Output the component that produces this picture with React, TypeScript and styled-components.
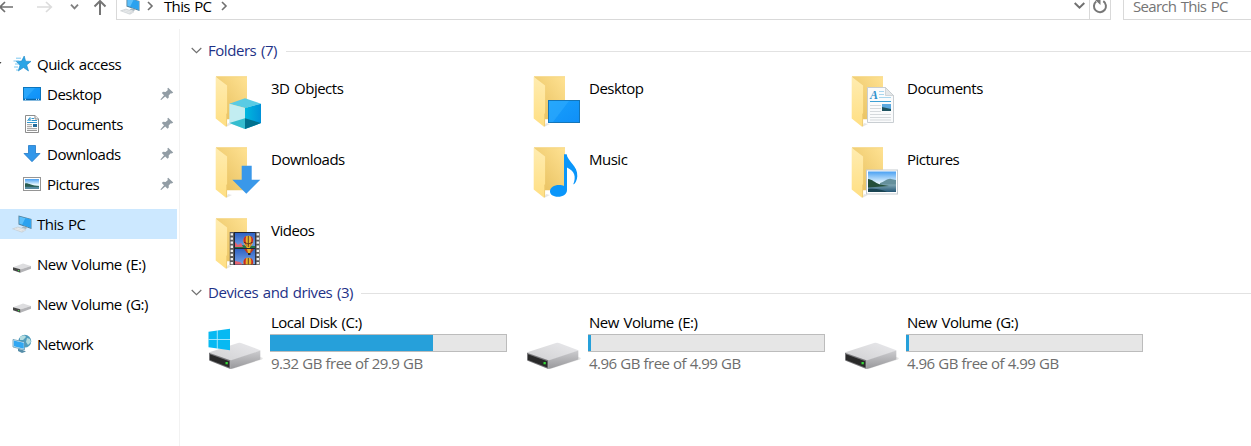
import React from "react";
import styled, { createGlobalStyle } from "styled-components";

const GlobalStyle = createGlobalStyle`
  * { box-sizing: border-box; }
  body {
    margin: 0;
    background: #fff;
    color: #000;
    font: 15px/20px "Open Sans", "Noto Sans", sans-serif;
    letter-spacing: -0.5px;
    word-spacing: 1.2px;
    overflow: hidden;
  }
  svg { display: block; flex: none; }
`;

const Window = styled.div`
  display: flex;
  flex-direction: column;
  height: 446px;
  overflow: hidden;
`;

const Toolbar = styled.header`
  display: flex;
  flex: none;
  height: 29px;
  margin-top: -9px;
`;

const NavButtons = styled.div`
  width: 116px;
  flex: none;
`;

const AddressBar = styled.div`
  display: flex;
  align-items: center;
  width: 995px;
  border: 1px solid #d9d9d9;
  padding-left: 3px;
`;

const Crumb = styled.span`
  width: 48px;
  margin: 0 9px 0 10px;
  letter-spacing: -0.65px;
  white-space: nowrap;
`;

const CrumbGap = styled.span`
  width: 7px;
`;

const AddressActions = styled.div`
  display: flex;
  align-items: center;
  align-self: stretch;
  margin-left: auto;
`;

const Refresh = styled.div`
  display: flex;
  align-items: center;
  justify-content: center;
  align-self: stretch;
  width: 21px;
  margin-left: 4px;
  border-left: 1px solid #d9d9d9;
`;

const SearchBox = styled.div`
  display: flex;
  align-items: center;
  flex: 1;
  margin-left: 12px;
  padding-left: 9px;
  border: 1px solid #d9d9d9;
  border-right: 0;
  color: #757575;
  letter-spacing: -0.7px;
`;

const Body = styled.div`
  display: flex;
  flex: 1;
  margin-top: 9px;
`;

const Sidebar = styled.nav`
  width: 180px;
  flex: none;
  padding-top: 20px;
  border-right: 1px solid #f2f2f2;
`;

const NavRow = styled.div<{ $nested?: boolean; $selected?: boolean; $spaced?: boolean; $flush?: boolean }>`
  display: flex;
  align-items: center;
  width: 177px;
  height: 30px;
  margin-top: ${(p) => (p.$spaced ? 10 : 0)}px;
  padding: 0 3px 0 ${(p) => (p.$flush ? 0 : p.$nested ? 22 : 12)}px;
  background: ${(p) => (p.$selected ? "#cce8ff" : "transparent")};
`;

const NavLabel = styled.span`
  flex: 1;
  margin-left: 5px;
  white-space: nowrap;
`;

const Content = styled.main`
  flex: 1;
  padding: 11px 0 0 11px;
`;

const GroupHeader = styled.h2`
  display: flex;
  align-items: center;
  height: 20px;
  margin: 0;
  color: #1e3287;
  font-size: 15px;
  font-weight: 400;
  letter-spacing: -0.45px;
  white-space: nowrap;
  &::after {
    content: "";
    flex: 1;
    height: 1px;
    margin: 2px 0 0 9px;
    background: #e2e2e2;
  }
`;

const GroupTitle = styled.span<{ $width: number }>`
  width: ${(p) => p.$width}px;
  margin-left: 6px;
`;

const FolderGrid = styled.div`
  display: grid;
  grid-template-columns: repeat(3, 318px);
  grid-template-rows: 71px 71px 64px;
  padding: 16px 0 0 24px;
`;

const FolderTile = styled.div`
  display: flex;
`;

const FolderLabel = styled.span`
  margin: 2px 0 0 8px;
`;

const DriveGrid = styled.div`
  display: grid;
  grid-template-columns: repeat(3, 318px);
  padding: 10px 0 0 17px;
`;

const DriveTile = styled.div`
  display: flex;
`;

const DriveInfo = styled.div`
  width: 237px;
  margin-left: 6px;
`;

const DriveText = styled.div<{ $muted?: boolean }>`
  height: 20px;
  padding-left: 1px;
  margin-top: ${(p) => (p.$muted ? 1 : 0)}px;
  color: ${(p) => (p.$muted ? "#6d6d6d" : "#000")};
  word-spacing: ${(p) => (p.$muted ? 0.2 : 1.2)}px;
`;

const Meter = styled.div`
  height: 18px;
  margin-top: 2px;
  border: 1px solid #bcbcbc;
  background: #e6e6e6;
`;

const MeterFill = styled.div<{ $px: number }>`
  width: ${(p) => p.$px}px;
  height: 16px;
  margin-left: -1px;
  background: #26a0da;
`;

const DriveIconSlot = styled.div`
  padding-top: 16px;
`;

const DefsHolder = styled.div`
  height: 0;
  flex: none;
`;

const Gradients = () => (
  <svg width="0" height="0">
    <defs>
      <linearGradient id="back" x1="0" y1="1" x2="1" y2="0">
        <stop offset="0" stopColor="#e5bd5a" />
        <stop offset="1" stopColor="#ffe293" />
      </linearGradient>
      <linearGradient id="flap" x1="0" y1="0" x2="0" y2="1">
        <stop offset="0" stopColor="#ffecb0" />
        <stop offset="1" stopColor="#ffdf83" />
      </linearGradient>
      <linearGradient id="sky" x1="0" y1="0" x2="0" y2="1">
        <stop offset="0" stopColor="#4aa0f2" />
        <stop offset=".55" stopColor="#e3f4fd" />
        <stop offset="1" stopColor="#a9d2e4" />
      </linearGradient>
      <linearGradient id="lake" x1="0" y1="0" x2="0" y2="1">
        <stop offset="0" stopColor="#82a9b6" />
        <stop offset="1" stopColor="#245675" />
      </linearGradient>
      <linearGradient id="blue" x1="0" y1="0" x2="1" y2="1">
        <stop offset="0" stopColor="#18a0fb" />
        <stop offset="1" stopColor="#0f8ff8" />
      </linearGradient>
      <linearGradient id="cubeRight" x1="0" y1="0" x2="1" y2="0">
        <stop offset="0" stopColor="#00b8de" />
        <stop offset="1" stopColor="#0091d8" />
      </linearGradient>
      <linearGradient id="driveTop" x1="0" y1="1" x2="1" y2="0">
        <stop offset="0" stopColor="#d0d0d2" />
        <stop offset="1" stopColor="#e9e9ec" />
      </linearGradient>
      <linearGradient id="driveSide" x1="0" y1="0" x2="0" y2="1">
        <stop offset="0" stopColor="#cccccf" />
        <stop offset="1" stopColor="#98989b" />
      </linearGradient>
      <linearGradient id="film" x1="0" y1="0" x2="0" y2="1">
        <stop offset="0" stopColor="#2e62c4" />
        <stop offset="1" stopColor="#77a4e8" />
      </linearGradient>
    </defs>
  </svg>
);

const Chevron = ({ dir = "down", size = 10, color = "#707070", stroke = 1.6 }: { dir?: "down" | "right"; size?: number; color?: string; stroke?: number }) =>
  dir === "down" ? (
    <svg width={size} height="7" viewBox={`0 0 ${size} 7`}>
      <path d={`M.7 1 L${size / 2} 5.6 L${size - 0.7} 1`} fill="none" stroke={color} strokeWidth={stroke} />
    </svg>
  ) : (
    <svg width="7" height="10" viewBox="0 0 7 10">
      <path d="M1 1 L5 5 L1 9" fill="none" stroke={color} strokeWidth={stroke} />
    </svg>
  );

const Expander = () => (
  <svg width="12" height="8" viewBox="0 0 12 8">
    <path d="M0 2H1.5L0 4Z" fill="#404040" />
  </svg>
);

const NavArrows = () => (
  <svg width="116" height="29" viewBox="0 -9 116 29" fill="none" strokeWidth="1.7">
    <path d="M0 7H13M5 2L0 7L5 12" stroke="#707070" />
    <path d="M37 7H51M46 2L51.3 7L46 12" stroke="#dcdcdc" />
    <path d="M71 4.7L74.5 8.3L78 4.7" stroke="#808080" strokeWidth="1.9" />
    <path d="M100 15V1M94.5 6.5L100 1L105.5 6.5" stroke="#757575" strokeWidth="2" />
  </svg>
);

const PcIcon = () => (
  <svg width="20" height="20" viewBox="0 0 20 20">
    <path d="M6.5 1.5L19.5 5V15L6.5 10.5Z" fill="#4d7e9b" />
    <path d="M7.3 2.4L18.8 5.5V13.8L7.3 9.8Z" fill="#5bbffb" />
    <path d="M13.5 4L18.8 5.5V13.8L10 10.8Z" fill="#2ba2ef" />
    <path d="M12 12.2L16 13.6L13.5 15L9.5 13.5Z" fill="#a7b6be" />
    <path d="M.5 14.8L6 13L14 15.8L10 18.3Z" fill="#d6dadd" stroke="#c3c9cd" strokeWidth=".5" />
    <path d="M3 14.8L10 17M5 14L12.5 16.3" stroke="#f1f3f4" strokeWidth=".6" />
  </svg>
);

const StarIcon = () => (
  <svg width="20" height="20" viewBox="0 0 20 20">
    <path d="M12.2 2L13.6 7.2L19 7.4L14.7 10.9L16.5 17L11.5 13.5L6.2 17L8 11.2L4.2 7.4L9.6 7.1Z" fill="#2ba5e6" stroke="#1784c5" strokeWidth=".6" />
    <path d="M4 4.2H9M1.5 7H7M3 10H7M2 13H6M4 16H7" stroke="#5bb9eb" strokeWidth=".8" />
  </svg>
);

const DesktopIcon = () => (
  <svg width="20" height="20" viewBox="0 0 20 20">
    <rect x="1.5" y="3.5" width="17" height="12.5" fill="url(#blue)" stroke="#0c75bd" />
    <path d="M2 4H13L4 14H2Z" fill="#48b8ff" opacity=".4" />
    <path d="M2 15.3H18" stroke="#075e9d" />
    <path d="M3 15.3H5M14 15.3H17" stroke="#dff3ff" strokeDasharray="1 1" />
  </svg>
);

const DocumentIcon = () => (
  <svg width="20" height="20" viewBox="0 0 20 20">
    <path d="M3.5 1.5H13L16.5 5V18.5H3.5Z" fill="#fff" stroke="#8d8d8d" />
    <path d="M13 1.5V5H16.5" fill="#eee" stroke="#8d8d8d" />
    <path d="M5.5 6.8L8 3.5V7M6 6H8.5M9.5 4.5H12M9.5 6.5H15M5 8.5H15" fill="none" stroke="#2f96ce" />
    <path d="M5 10.7H10M5 12.7H10M5 14.7H15M5 16.5H15" stroke="#8f8f8f" strokeWidth=".9" />
    <rect x="11" y="10" width="4" height="3" fill="#246c9b" />
  </svg>
);

const DownloadIcon = () => (
  <svg width="20" height="20" viewBox="0 0 20 20">
    <path d="M6.5 1.5H13.5V9.5H18L10 17.7L2 9.5H6.5Z" fill="#3297ea" stroke="#2179c7" strokeWidth=".8" />
  </svg>
);

const PictureIcon = () => (
  <svg width="20" height="20" viewBox="0 0 20 20">
    <rect x="1.5" y="3.5" width="17" height="13" fill="#fff" stroke="#959595" />
    <rect x="3" y="5" width="14" height="10" fill="url(#sky)" />
    <path d="M3 9.5C6 8.5 9 12 17 12V13H3Z" fill="#285c50" />
    <path d="M3 12.8H17V15H3Z" fill="#568aa0" />
  </svg>
);

const SmallDrive = () => (
  <svg width="20" height="20" viewBox="0 0 20 20">
    <path d="M1 13.2L11 9.5L19 12L8.3 15.5Z" fill="#dddddf" />
    <path d="M8.3 15.5L19 12V14.7L8.3 18.7Z" fill="#b4b4b7" />
    <path d="M1 13.2L8.3 15.3V18.7L1 16.3Z" fill="#474747" />
    <rect x="6" y="16" width="1.2" height="1.2" fill="#3ed34d" />
  </svg>
);

const NetworkIcon = () => (
  <svg width="20" height="20" viewBox="0 0 20 20">
    <circle cx="12.8" cy="7.2" r="6.4" fill="#4f9cbd" />
    <path d="M8 3C10 .8 14 1 14 3L11 6L8 6ZM15 4L18 5L19 8L16 11L14 8Z" fill="#b4dcdf" />
    <path d="M1 5.5L12.5 8V15.8L1 13Z" fill="#e7f5fb" stroke="#4788a8" strokeWidth=".7" />
    <path d="M1.8 6.5L11.8 8.8V14.8L1.8 12.2Z" fill="#31a7f2" />
    <path d="M6 14.7V17L10 19L14 17.4L10 15.8" fill="#558da8" />
  </svg>
);

const PinIcon = () => (
  <svg width="14" height="14" viewBox="0 0 14 14">
    <path d="M8.2.8L13.2 5.4L11.8 6.5L10.8 6.2L8.7 8.5L8.8 10.6L7.5 11.8L5.2 9.4L1.2 13L.4 12.6L4 8.2L1.8 6L3.1 4.8L5.6 5L7.9 2.9L7.3 1.8Z" fill="#929da5" />
  </svg>
);

const CubeArt = () => (
  <>
    <path d="M14.3 27.7L30 22.3L46 27.7L30 32Z" fill="#59cbe4" />
    <path d="M14.3 27.7L30 32V53L14.3 47Z" fill="#c2edf1" />
    <path d="M30 32L46 27.7V47L30 53Z" fill="url(#cubeRight)" />
    <path d="M14.3 47L30 42.3V53Z" fill="#35bdcf" />
    <path d="M30 42.3L46 47L30 53Z" fill="#00718f" />
  </>
);

const DesktopArt = () => (
  <>
    <rect x="15.5" y="24.5" width="31" height="22" fill="url(#blue)" stroke="#1475b8" />
    <path d="M16 25H36L20 46H16Z" fill="#3cb3ff" opacity=".4" />
  </>
);

const DocumentArt = () => (
  <>
    <path d="M16.5 11.5H34.5L42.5 19.5V46.5H16.5Z" fill="#fafbfc" stroke="#c9ced2" />
    <path d="M34.5 11.5V19.5H42.5Z" fill="#e4e7e9" stroke="#c3c8cb" strokeWidth=".7" />
    <text x="19" y="23" fontFamily="Liberation Serif, serif" fontSize="12" fontWeight="700" fontStyle="italic" fill="#2d90cb">A</text>
    <path d="M28 15.5H33M28 18.5H33M28 21.5H40" stroke="#a8d6ee" />
    <path d="M19 25.5H40" stroke="#3c9fd4" />
    <path d="M19 29.5H30M19 32.5H30M19 35.5H30M19 38.5H40M19 41.5H40M19 44H40" stroke="#d5d9dc" />
    <rect x="31" y="28" width="9" height="7" fill="#5ca9df" />
    <path d="M31 31L40 33V35H31Z" fill="#1e5360" />
  </>
);

const DownloadArt = () => (
  <path d="M26.7 18.7H36.7V32.7H45.3L31.3 46.7L17.3 32.7H26.7Z" fill="#3a98e9" />
);

const MusicArt = () => (
  <path d="M31 7.3H33.7C34.2 14 45 19 44.3 29.2C44 33 42.5 36.5 40.2 37.6C43.5 29.5 41.5 24 34 20.5V43C34 47 30 49.8 25 49.8C20 49.8 17 47.5 17 44.3C17 40.7 21 38 26 38C28 38 29.7 38.2 31 39Z" fill="#0a96fa" />
);

const PictureArt = () => (
  <>
    <rect x="15.5" y="23" width="31" height="24" fill="#fff" stroke="#c5cbd0" />
    <rect x="17" y="24.5" width="28" height="20.5" fill="url(#sky)" />
    <path d="M29 36C33 35 37 31 40 32L45 33V38H29Z" fill="#65909c" />
    <path d="M17 37.5H45V45H17Z" fill="url(#lake)" />
    <path d="M17 32C21 32 24 36 29 37.5L38 39L17 40.5Z" fill="#244f3a" />
    <path d="M17 42C25 41 32 43 36 45H17Z" fill="#194452" />
  </>
);

const Balloon = ({ x, y }: { x: number; y: number }) => (
  <g transform={`translate(${x} ${y})`}>
    <path d="M-5 0C-5-7 5-7 5 0C5 3 2 5 1.5 7H-1.5C-2 5-5 3-5 0Z" fill="#e7b52c" />
    <path d="M-2-5C-3-2-3 2-1 6L-3 3C-6 0-5-4-2-5ZM2-5C4-2 3 2 1 6L3 3C6 0 5-4 2-5Z" fill="#c9262b" />
    <path d="M-4.5 1.2L0 3L4.5 1.2M0-5V6" fill="none" stroke="#49251f" strokeWidth=".8" />
    <rect x="-1" y="7" width="2" height="1.8" fill="#3b2921" />
  </g>
);

const FilmArt = () => (
  <>
    <rect x="14.7" y="14" width="30" height="33" fill="#5a5a5a" />
    <rect x="19" y="14" width="21.7" height="33" fill="#202636" />
    <path d="M16.8 15.3V47M42.8 15.3V47" stroke="#f1f1f1" strokeWidth="2.4" strokeDasharray="2.3 1.8" />
    <svg x="20" y="15" width="20" height="15" viewBox="20 15 20 15">
      <rect x="20" y="15" width="20" height="15" fill="url(#film)" />
      <path d="M20 28L26 27L40 28V30H20Z" fill="#277446" />
      <path d="M20 24L23 27L26 25L28 29H20Z" fill="#e46471" />
      <Balloon x={33.3} y={23} />
    </svg>
    <svg x="20" y="31" width="20" height="15.5" viewBox="20 31 20 15.5">
      <rect x="20" y="31" width="20" height="15.5" fill="url(#film)" />
      <path d="M29 31H39L36 35H32Z" fill="#b53a25" />
      <path d="M32 31H36L35 35H33Z" fill="#e7b52c" />
      <path d="M33 35H35.5V37H33Z" fill="#252525" />
      <path d="M20 43L25 44L28 47H20Z" fill="#e46471" />
      <Balloon x={33.3} y={45} />
    </svg>
  </>
);

const FolderIcon = ({ children }: { children: React.ReactNode }) => (
  <svg width="48" height="54" viewBox="0 0 48 54">
    <path d="M11 51L17 48L13 47Z" fill="#000" opacity=".1" />
    <path d="M1 .5H32V43.2H11Z" fill="url(#back)" />
    <path d="M1 .7H32" stroke="#f5d27b" strokeWidth=".7" />
    <path d="M.7 .7L12.1 9.5V37L11 39V50.8L.7 42.6Z" fill="url(#flap)" />
    <path d="M11 39V50.8L12.1 50V37Z" fill="#f1cf76" />
    {children}
  </svg>
);

const DriveIcon = ({ system }: { system?: boolean }) => (
  <svg width="56" height="44" viewBox="0 0 56 44">
    <path d="M23 41.5L54 31.5L55 30L50 28Z" fill="#000" opacity=".1" />
    <path d="M1 25Q1 24.3 2 24L30 15Q31.3 14.5 33 15L51 21.7Q52.3 22.3 52.3 23L22.3 33Z" fill="url(#driveTop)" />
    <path d="M22.3 32.5L52.3 22.6V31.5L24 40.7L22.3 41Z" fill="url(#driveSide)" />
    <path d="M1 24.8L22.3 32.3V41L1.6 32.7Q1 32.4 1 31.5Z" fill="#77777a" />
    <path d="M2 26.3L21.3 33.2V39.4L2 31.9Z" fill="#292929" />
    <rect x="17.5" y="34" width="2.3" height="2.3" fill="#35db38" />
    {system && (
      <>
        <path d="M.5 3.8L22 .8V22.2L.5 19.3Z" fill="#07b9f2" />
        <path d="M9.3 2V21M.5 11.5H22" stroke="#c3efff" strokeWidth=".8" />
      </>
    )}
  </svg>
);

const quickLinks = [
  { name: "Desktop", Icon: DesktopIcon },
  { name: "Documents", Icon: DocumentIcon },
  { name: "Downloads", Icon: DownloadIcon },
  { name: "Pictures", Icon: PictureIcon },
];

const places = [
  { name: "This PC", Icon: PcIcon, selected: true },
  { name: "New Volume (E:)", Icon: SmallDrive },
  { name: "New Volume (G:)", Icon: SmallDrive },
  { name: "Network", Icon: NetworkIcon },
];

const folders = [
  { name: "3D Objects", Art: CubeArt },
  { name: "Desktop", Art: DesktopArt },
  { name: "Documents", Art: DocumentArt },
  { name: "Downloads", Art: DownloadArt },
  { name: "Music", Art: MusicArt },
  { name: "Pictures", Art: PictureArt },
  { name: "Videos", Art: FilmArt },
];

const drives = [
  { name: "Local Disk (C:)", space: "9.32 GB free of 29.9 GB", used: 163, system: true },
  { name: "New Volume (E:)", space: "4.96 GB free of 4.99 GB", used: 3 },
  { name: "New Volume (G:)", space: "4.96 GB free of 4.99 GB", used: 3 },
];

export default function App() {
  return (
    <Window>
      <GlobalStyle />
      <DefsHolder><Gradients /></DefsHolder>
      <Toolbar>
        <NavButtons><NavArrows /></NavButtons>
        <AddressBar>
          <PcIcon />
          <CrumbGap />
          <Chevron dir="right" />
          <Crumb>This PC</Crumb>
          <Chevron dir="right" />
          <AddressActions>
            <Chevron size={11} stroke={2} />
            <Refresh>
              <svg width="16" height="16" viewBox="0 0 16 16">
                <path d="M4.2 3.5A6 6 0 1 0 11.3 3.2" fill="none" stroke="#777" strokeWidth="2" />
                <path d="M3 1.8H8.5V7Z" fill="#777" />
              </svg>
            </Refresh>
          </AddressActions>
        </AddressBar>
        <SearchBox>Search This PC</SearchBox>
      </Toolbar>
      <Body>
        <Sidebar>
          <NavRow $flush>
            <Expander />
            <StarIcon />
            <NavLabel>Quick access</NavLabel>
          </NavRow>
          {quickLinks.map(({ name, Icon }) => (
            <NavRow key={name} $nested>
              <Icon />
              <NavLabel>{name}</NavLabel>
              <PinIcon />
            </NavRow>
          ))}
          {places.map(({ name, Icon, selected }) => (
            <NavRow key={name} $spaced $selected={selected}>
              <Icon />
              <NavLabel>{name}</NavLabel>
            </NavRow>
          ))}
        </Sidebar>
        <Content>
          <GroupHeader>
            <Chevron size={11} stroke={1.2} />
            <GroupTitle $width={69}>Folders (7)</GroupTitle>
          </GroupHeader>
          <FolderGrid>
            {folders.map(({ name, Art }) => (
              <FolderTile key={name}>
                <FolderIcon><Art /></FolderIcon>
                <FolderLabel>{name}</FolderLabel>
              </FolderTile>
            ))}
          </FolderGrid>
          <GroupHeader>
            <Chevron size={11} stroke={1.2} />
            <GroupTitle $width={144}>Devices and drives (3)</GroupTitle>
          </GroupHeader>
          <DriveGrid>
            {drives.map((d) => (
              <DriveTile key={d.name}>
                <DriveIconSlot><DriveIcon system={d.system} /></DriveIconSlot>
                <DriveInfo>
                  <DriveText>{d.name}</DriveText>
                  <Meter><MeterFill $px={d.used} /></Meter>
                  <DriveText $muted>{d.space}</DriveText>
                </DriveInfo>
              </DriveTile>
            ))}
          </DriveGrid>
        </Content>
      </Body>
    </Window>
  );
}
